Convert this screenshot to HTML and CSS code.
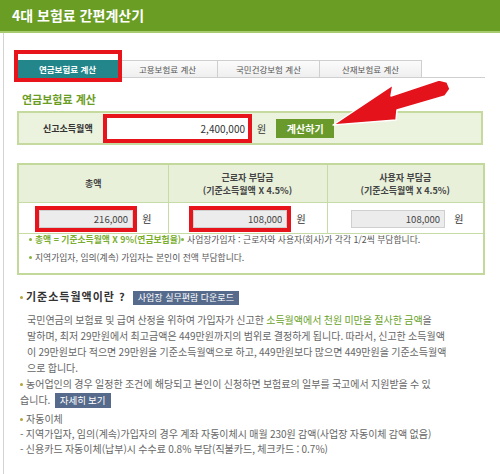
FILE: index.html
```html
<!DOCTYPE html>
<html lang="ko">
<head>
<meta charset="utf-8">
<title>4대 보험료 간편계산기</title>
<link rel="stylesheet" href="styles.css">
</head>
<body>
<div class="page">
<div class="top_bar"><h1>4대 보험료 간편계산기</h1></div>
<div class="wrap">
	<ul class="tabs">
		<li class="tab_on">연금보험료 계산</li>
		<li>고용보험료 계산</li>
		<li class="tab_wide">국민건강보험 계산</li>
		<li class="tab_wide">산재보험료 계산</li>
	</ul>
	<h2 class="calc_title">연금보험료 계산</h2>
	<div class="income_box">
		<span class="income_label">신고소득월액</span>
		<span class="mark"><input type="text" class="income_input" value="2,400,000"></span>
		<span class="won">원</span>
		<button class="btn_calc">계산하기</button>
	</div>
	<table class="result_tbl">
		<colgroup><col class="c1"><col class="c2"><col class="c3"></colgroup>
		<tr>
			<th>총액</th>
			<th>근로자 부담금<br>(기준소득월액 X 4.5%)</th>
			<th>사용자 부담금<br>(기준소득월액 X 4.5%)</th>
		</tr>
		<tr class="row_val">
			<td><span class="mark"><input type="text" class="val_input" value="216,000"></span><span class="won">원</span></td>
			<td><span class="mark"><input type="text" class="val_input" value="108,000"></span><span class="won">원</span></td>
			<td><span class="nomark"><input type="text" class="val_input" value="108,000"></span><span class="won">원</span></td>
		</tr>
		<tr>
			<td colspan="3" class="notes">
				<p><i class="dot"></i><b class="green">총액 = 기준소득월액 X 9%(연금보험율)</b><i class="dot"></i>사업장가입자 : 근로자와 사용자(회사)가 각각 1/2씩 부담합니다.</p>
				<p class="note2"><i class="dot"></i>지역가입자, 임의(계속) 가입자는 본인이 전액 부담합니다.</p>
			</td>
		</tr>
	</table>
	<div class="info">
		<h3 class="info_title"><i class="dot_o"></i>기준소득월액이란 ? <span class="btn_blue">사업장 실무편람 다운로드</span></h3>
		<p class="info_txt">국민연금의 보험료 및 급여 산정을 위하여 가입자가 신고한 <span class="green_t">소득월액에서 천원 미만을 절사한 금액</span>을<br>
		말하며, 최저 29만원에서 최고금액은 449만원까지의 범위로 결정하게 됩니다. 따라서, 신고한 소득월액<br>
		이 29만원보다 적으면 29만원을 기준소득월액으로 하고, 449만원보다 많으면 449만원을 기준소득월액<br>
		으로 합니다.</p>
		<p class="info_item"><i class="dot_o"></i>농어업인의 경우 일정한 조건에 해당되고 본인이 신청하면 보험료의 일부를 국고에서 지원받을 수 있<br>
		습니다. <span class="btn_blue">자세히 보기</span></p>
		<p class="info_item auto"><i class="dot_o"></i>자동이체<br>
		- 지역가입자, 임의(계속)가입자의 경우 계좌 자동이체시 매월 230원 감액(사업장 자동이체 감액 없음)<br>
		- 신용카드 자동이체(납부)시 수수료 0.8% 부담(직불카드, 체크카드 : 0.7%)</p>
	</div>
</div>
<div class="tab_mark"></div>
<svg class="arrow" width="500" height="140" viewBox="0 0 500 140">
	<polygon points="333,125 393,85 391,96 439,80 447,82 450,89 445,96 397,110 396,120" fill="#e3121b" stroke="#fff" stroke-width="1.5" stroke-linejoin="round"/>
</svg>
</div>
</body>
</html>
```

FILE: styles.css
```css
body {
  margin: 0;
  background: #fff;
  font-family: "Noto Sans CJK KR", "Noto Sans", sans-serif;
  color: #555;
}

.page {
  position: relative;
  width: 500px;
  height: 474px;
  overflow: hidden;
}

.top_bar {
  height: 31px;
  background: #6a9d23;
  border-bottom: 2px solid #a8ca6e;
}

.top_bar h1 {
  margin: 0;
  padding-left: 12px;
  line-height: 30px;
  font-size: 14px;
  font-weight: bold;
  color: #fff;
}

.wrap {
  margin-left: 3px;
  border-left: 1px solid #d3d3d3;
  padding: 27px 0 0 13px;
  height: 420px;
}

/* tabs */
.tabs {
  display: flex;
  list-style: none;
  margin: 0 0 0 1px;
  padding: 0;
  width: 467px;
  height: 17px;
  border-bottom: 1px solid #cfcfcf;
}

.tabs li {
  width: 100px;
  height: 17px;
  border: 1px solid #cfcfcf;
  border-left: 0;
  border-bottom: 0;
  box-sizing: border-box;
  background: linear-gradient(to bottom, #fbfbfb, #efefef);
  text-align: center;
  line-height: 16px;
  font-size: 8.5px;
  color: #555;
}

.tabs li.tab_wide {
  width: 102px;
}

.tabs li.tab_on {
  background: #23868a;
  border-color: #23868a;
  color: #fff;
  font-weight: bold;
  height: 18px;
}

.tab_mark {
  position: absolute;
  left: 14px;
  top: 50px;
  width: 100px;
  height: 24px;
  border: 4px solid #e8141b;
}

.calc_title {
  margin: 14px 0 0 5px;
  font-size: 11px;
  line-height: 14px;
  color: #6b9d24;
}

/* income row */
.income_box {
  display: flex;
  align-items: center;
  margin-top: 5px;
  width: 462px;
  height: 30px;
  background: #ebf2dd;
  border: 2px solid #c6da9f;
}

.income_label {
  margin-left: 24px;
  width: 52px;
  font-size: 9px;
  font-weight: bold;
  color: #333;
}

.mark {
  display: inline-block;
  border: 4px solid #e8141b;
  line-height: 0;
}

.income_box .mark {
  margin-left: 8px;
}

.nomark {
  display: inline-block;
  border: 4px solid transparent;
  line-height: 0;
}

.income_input {
  width: 141px;
  height: 21px;
  box-sizing: border-box;
  border: 0;
  padding: 0 3px 0 0;
  text-align: right;
  font-family: "Noto Sans CJK KR", sans-serif;
  font-size: 10px;
  color: #333;
}

.won {
  margin-left: 5px;
  font-size: 10px;
  color: #333;
}

.btn_calc {
  margin-left: 10px;
  width: 58px;
  height: 19px;
  padding: 0;
  border: 0;
  background: #6a9a2b;
  color: #fff;
  font-family: "Noto Sans CJK KR", sans-serif;
  font-size: 10px;
  font-weight: bold;
}

/* result table */
.result_tbl {
  margin-top: 18px;
  width: 466px;
  border-collapse: collapse;
  table-layout: fixed;
  border: 2px solid #c3d99b;
}

.result_tbl col.c1 { width: 150px; }
.result_tbl col.c2 { width: 159px; }
.result_tbl col.c3 { width: 157px; }

.result_tbl th {
  height: 37px;
  padding: 0;
  background: #e8f0da;
  border: 1px solid #c7dba6;
  font-size: 9px;
  line-height: 13px;
  color: #444;
}

.result_tbl td {
  padding: 0;
  border: 1px solid #c7dba6;
}

.row_val td {
  height: 30px;
  text-align: center;
  white-space: nowrap;
}

.row_val .won {
  vertical-align: middle;
}

.row_val .mark, .row_val .nomark {
  vertical-align: middle;
}

.val_input {
  width: 94px;
  height: 18px;
  box-sizing: border-box;
  border: 1px solid #cfcfcf;
  background: #ececec;
  padding: 0 4px 0 0;
  text-align: right;
  font-family: "Noto Sans CJK KR", sans-serif;
  font-size: 9.5px;
  color: #444;
}

.result_tbl td.notes {
  padding: 0 0 9px 10px;
  text-align: left;
  font-size: 8.8px;
  line-height: 12px;
  color: #555;
}

.notes p {
  margin: 0;
}

.notes p.note2 {
  margin-top: 6px;
}

.green {
  color: #79ad2f;
}

.dot {
  display: inline-block;
  width: 3px;
  height: 3px;
  margin: 0 3px 2px 0;
  border-radius: 50%;
  background: #86b43f;
  vertical-align: middle;
}

/* info text */
.info {
  padding-left: 3px;
}

.info_title {
  margin: 13px 0 0;
  font-size: 11px;
  line-height: 16px;
  letter-spacing: 1px;
  color: #333;
}

.dot_o {
  display: inline-block;
  width: 3px;
  height: 3px;
  margin: 0 3px 2px 0;
  border-radius: 50%;
  background: #b3a43a;
  vertical-align: middle;
}

.btn_blue {
  display: inline-block;
  margin-left: 3px;
  padding: 0 5px;
  line-height: 14px;
  background: #566b8c;
  color: #fff;
  font-size: 9px;
  font-weight: normal;
  letter-spacing: 0;
}

.info_txt {
  margin: 7px 0 0 7px;
  font-size: 10px;
  line-height: 16px;
  white-space: nowrap;
  word-spacing: -0.5px;
  color: #666;
}

.green_t {
  color: #6aa22a;
}

.info_item {
  margin: 0;
  font-size: 10px;
  line-height: 16px;
  white-space: nowrap;
  word-spacing: -0.5px;
  color: #666;
}

.info_item.auto {
  margin-top: 3px;
  line-height: 15px;
}

.info_item .btn_blue {
  margin-left: 2px;
  font-size: 9.5px;
  line-height: 15px;
}

.arrow {
  position: absolute;
  left: 0;
  top: 0;
}
```
